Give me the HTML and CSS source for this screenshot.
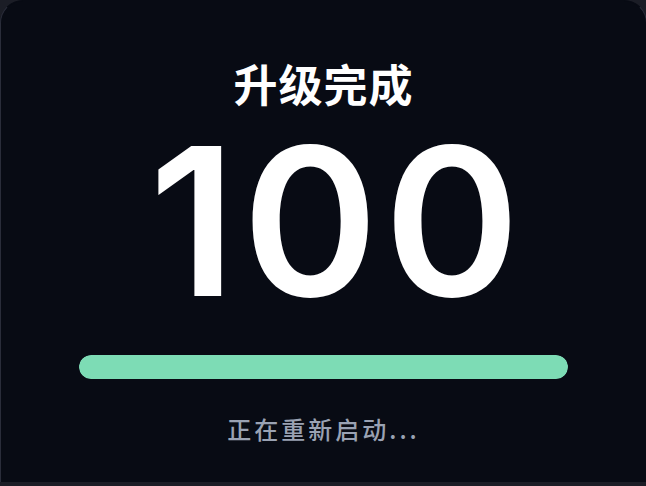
FILE: index.html
```html
<!DOCTYPE html>
<html lang="zh-CN">
<head>
<meta charset="utf-8">
<title>升级完成</title>
<link rel="stylesheet" href="styles.css">
</head>
<body>
<main class="card">
  <h1 class="title">升级完成</h1>
  <div class="percent">100</div>
  <div class="track"><div class="fill" style="width:100%"></div></div>
  <p class="status">正在重新启动...</p>
</main>
</body>
</html>
```
FILE: styles.css
```css
html, body {
  margin: 0;
  padding: 0;
  overflow: hidden;
}
body {
  width: 646px;
  height: 486px;
  background: #1b1d26;
  font-family: Inter, "Noto Sans CJK SC", sans-serif;
}
.card {
  box-sizing: border-box;
  width: 647px;
  height: 482px;
  background: #080b14;
  border: 1px solid #2a2d3a;
  border-top-color: #080b14;
  border-bottom: none;
  border-radius: 23px 23px 0 0;
  display: flex;
  flex-direction: column;
  align-items: center;
}
.title {
  margin: 56px 0 0;
  font-family: "Noto Sans CJK SC", sans-serif;
  font-weight: 700;
  font-size: 44px;
  line-height: 52px;
  letter-spacing: 1px;
  color: #ffffff;
}
.percent {
  margin-top: 32px;
  padding-left: 28px;
  font-family: Inter, sans-serif;
  font-weight: 600;
  font-size: 206px;
  line-height: 160px;
  letter-spacing: 6px;
  color: #ffffff;
}
.track {
  margin-top: 54px;
  width: 489px;
  height: 24px;
  border-radius: 12px;
  background: #1f2430;
  overflow: hidden;
}
.fill {
  height: 100%;
  border-radius: 12px;
  background: #7ddcb5;
}
.status {
  margin: 34px 0 0;
  font-family: "Noto Sans CJK SC", sans-serif;
  font-weight: 500;
  font-size: 24px;
  line-height: 32px;
  letter-spacing: 3px;
  color: #9aa2b3;
}
```
